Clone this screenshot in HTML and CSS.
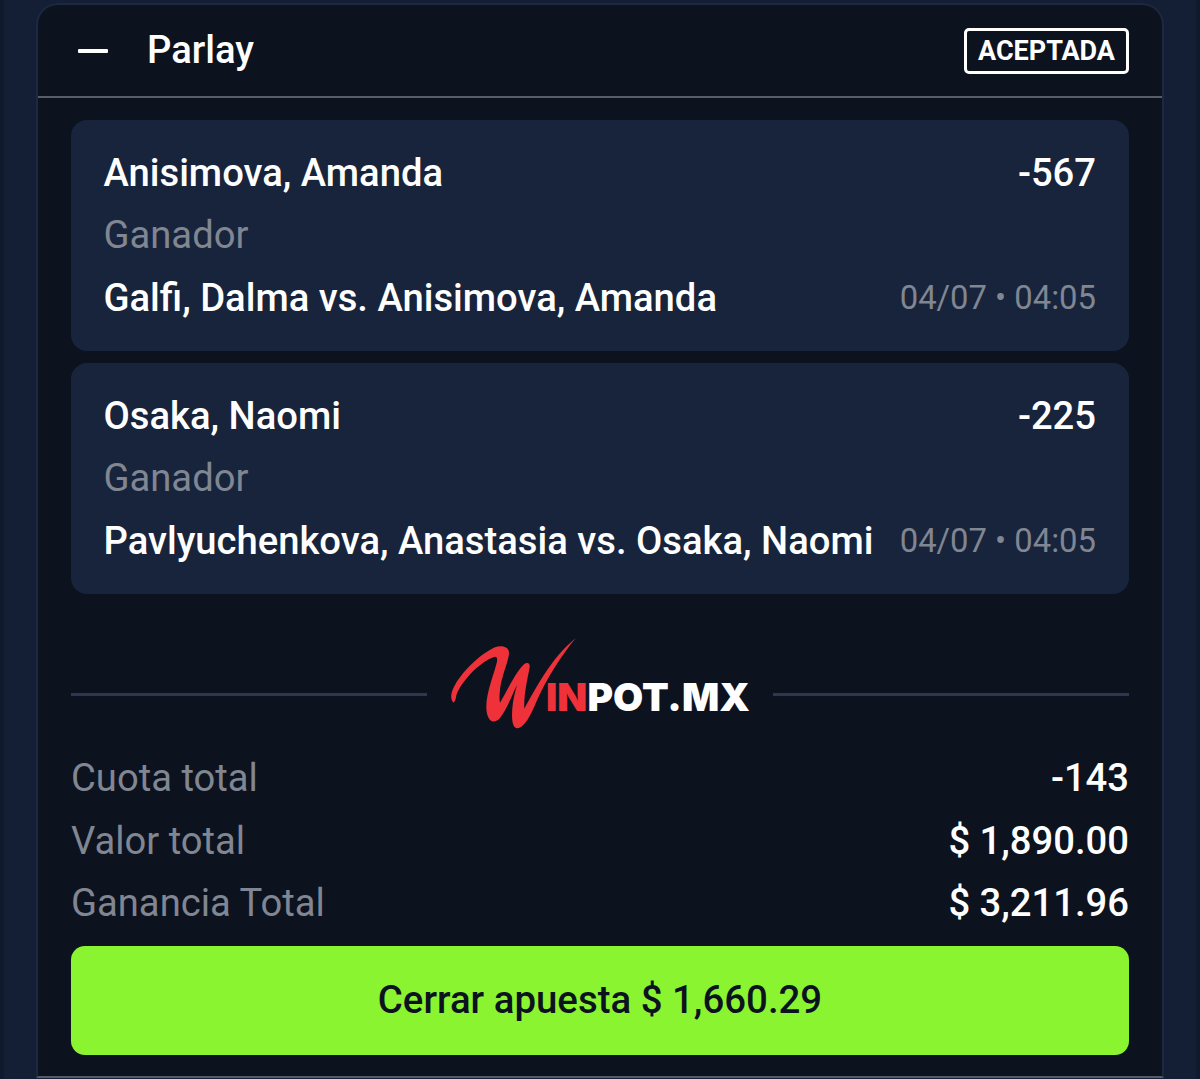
FILE: index.html
```html
<!DOCTYPE html>
<html lang="es">
<head>
    <meta charset="UTF-8">
    <title>Parlay</title>
    <link rel="stylesheet" href="styles.css">
</head>
<body>
    <div class="bet">
        <div class="bet-header">
            <span class="collapse"></span>
            <span class="bet-title">Parlay</span>
            <span class="status">ACEPTADA</span>
        </div>
        <div class="bet-body">
            <div class="leg">
                <div class="leg-row"><span>Anisimova, Amanda</span><span>-567</span></div>
                <div class="leg-row muted"><span>Ganador</span></div>
                <div class="leg-row"><span>Galfi, Dalma vs. Anisimova, Amanda</span><span class="date">04/07 • 04:05</span></div>
            </div>
            <div class="leg">
                <div class="leg-row"><span>Osaka, Naomi</span><span>-225</span></div>
                <div class="leg-row muted"><span>Ganador</span></div>
                <div class="leg-row"><span>Pavlyuchenkova, Anastasia vs. Osaka, Naomi</span><span class="date">04/07 • 04:05</span></div>
            </div>

            <div class="brand">
                <span class="brand-line"></span>
                <div class="logo">
                    <svg class="logo-w" viewBox="0 0 420 315" width="140" height="105">
                        <path fill="#ef3239" d="M25 218 C14 205 18 185 30 165 C55 120 110 70 150 52 C170 44 192 50 192 68 C192 90 174 125 166 170 C164 190 162 205 165 218 C182 190 210 130 235 105 C245 95 256 98 254 112 C247 150 236 195 238 236 C264 190 320 80 392 25 C350 75 302 150 272 220 C260 250 240 292 218 295 C203 296 199 270 202 235 C204 210 209 190 216 165 C203 190 185 240 165 264 C150 282 130 277 125 245 C118 200 148 130 156 95 C158 82 153 78 145 82 C110 95 60 140 36 190 C32 200 34 212 25 218 Z"/>
                    </svg>
                    <span class="logo-text"><span class="logo-red">IN</span>POT.MX</span>
                </div>
                <span class="brand-line"></span>
            </div>

            <div class="totals">
                <div class="total-row"><span class="muted">Cuota total</span><span>-143</span></div>
                <div class="total-row"><span class="muted">Valor total</span><span>$ 1,890.00</span></div>
                <div class="total-row"><span class="muted">Ganancia Total</span><span>$ 3,211.96</span></div>
            </div>

            <button class="cashout" type="button">Cerrar apuesta $ 1,660.29</button>
        </div>
    </div>
</body>
</html>
```

FILE: styles.css
```css
* {
    box-sizing: border-box;
}

html, body {
    height: 1079px;
    overflow: hidden;
}

body {
    margin: 0;
    padding: 3px 32px 0;
    background: #141f35;
    border-left: 4px solid #101a2d;
    border-right: 4px solid #101a2d;
    font-family: Roboto, "Liberation Sans", sans-serif;
    color: #fff;
}

.bet {
    height: 1075px;
    background: #0c131f;
    border: 2px solid #1c2840;
    border-bottom-color: #565b68;
    border-radius: 22px 22px 0 0;
}

.bet-header {
    height: 93px;
    display: flex;
    align-items: center;
    padding: 0 33px 0 40px;
    border-bottom: 2px solid #585d6a;
}

.collapse {
    width: 30px;
    height: 4px;
    background: #fff;
    border-radius: 1px;
}

.bet-title {
    margin: 0 0 2px 39px;
    flex: 1;
    font-size: 38.2px;
    font-weight: 500;
}

.status {
    width: 165px;
    height: 46px;
    display: flex;
    align-items: center;
    justify-content: center;
    border: 3px solid #fff;
    border-radius: 5px;
    font-size: 27px;
    font-weight: 700;
}

.bet-body {
    padding: 22px 33px 0;
}

.leg {
    height: 231px;
    margin-bottom: 12px;
    padding: 21.5px 33px 0 32.5px;
    background: #18243c;
    border-radius: 16px;
}

.leg-row {
    height: 62.5px;
    display: flex;
    align-items: center;
    justify-content: space-between;
    font-size: 38.2px;
    font-weight: 500;
}

.muted {
    color: #808692;
    font-weight: 400;
}

.date {
    font-size: 32.8px;
    font-weight: 400;
    color: #808692;
}

.brand {
    height: 121px;
    display: flex;
    align-items: flex-start;
    gap: 24px;
    margin-top: 32px;
}

.brand-line {
    flex: 1;
    height: 3px;
    margin-top: 67px;
    background: #2f3750;
}

.logo {
    position: relative;
    width: 298px;
    height: 92px;
}

.logo-w {
    position: absolute;
    left: -6px;
    top: 4px;
}

.logo-text {
    position: absolute;
    left: 95px;
    top: 47px;
    font-family: Inter, sans-serif;
    font-size: 39px;
    line-height: 48px;
    font-weight: 900;
    white-space: nowrap;
}

.logo-red {
    color: #ef3239;
}

.total-row {
    height: 62.5px;
    display: flex;
    align-items: center;
    justify-content: space-between;
    font-size: 38.2px;
    font-weight: 500;
}

.cashout {
    display: block;
    width: 100%;
    height: 109px;
    margin-top: 11px;
    padding-bottom: 2px;
    background: #8bf431;
    border: none;
    border-radius: 14px;
    font-family: Roboto, sans-serif;
    font-size: 38.4px;
    font-weight: 500;
    color: #0c131f;
}
```
